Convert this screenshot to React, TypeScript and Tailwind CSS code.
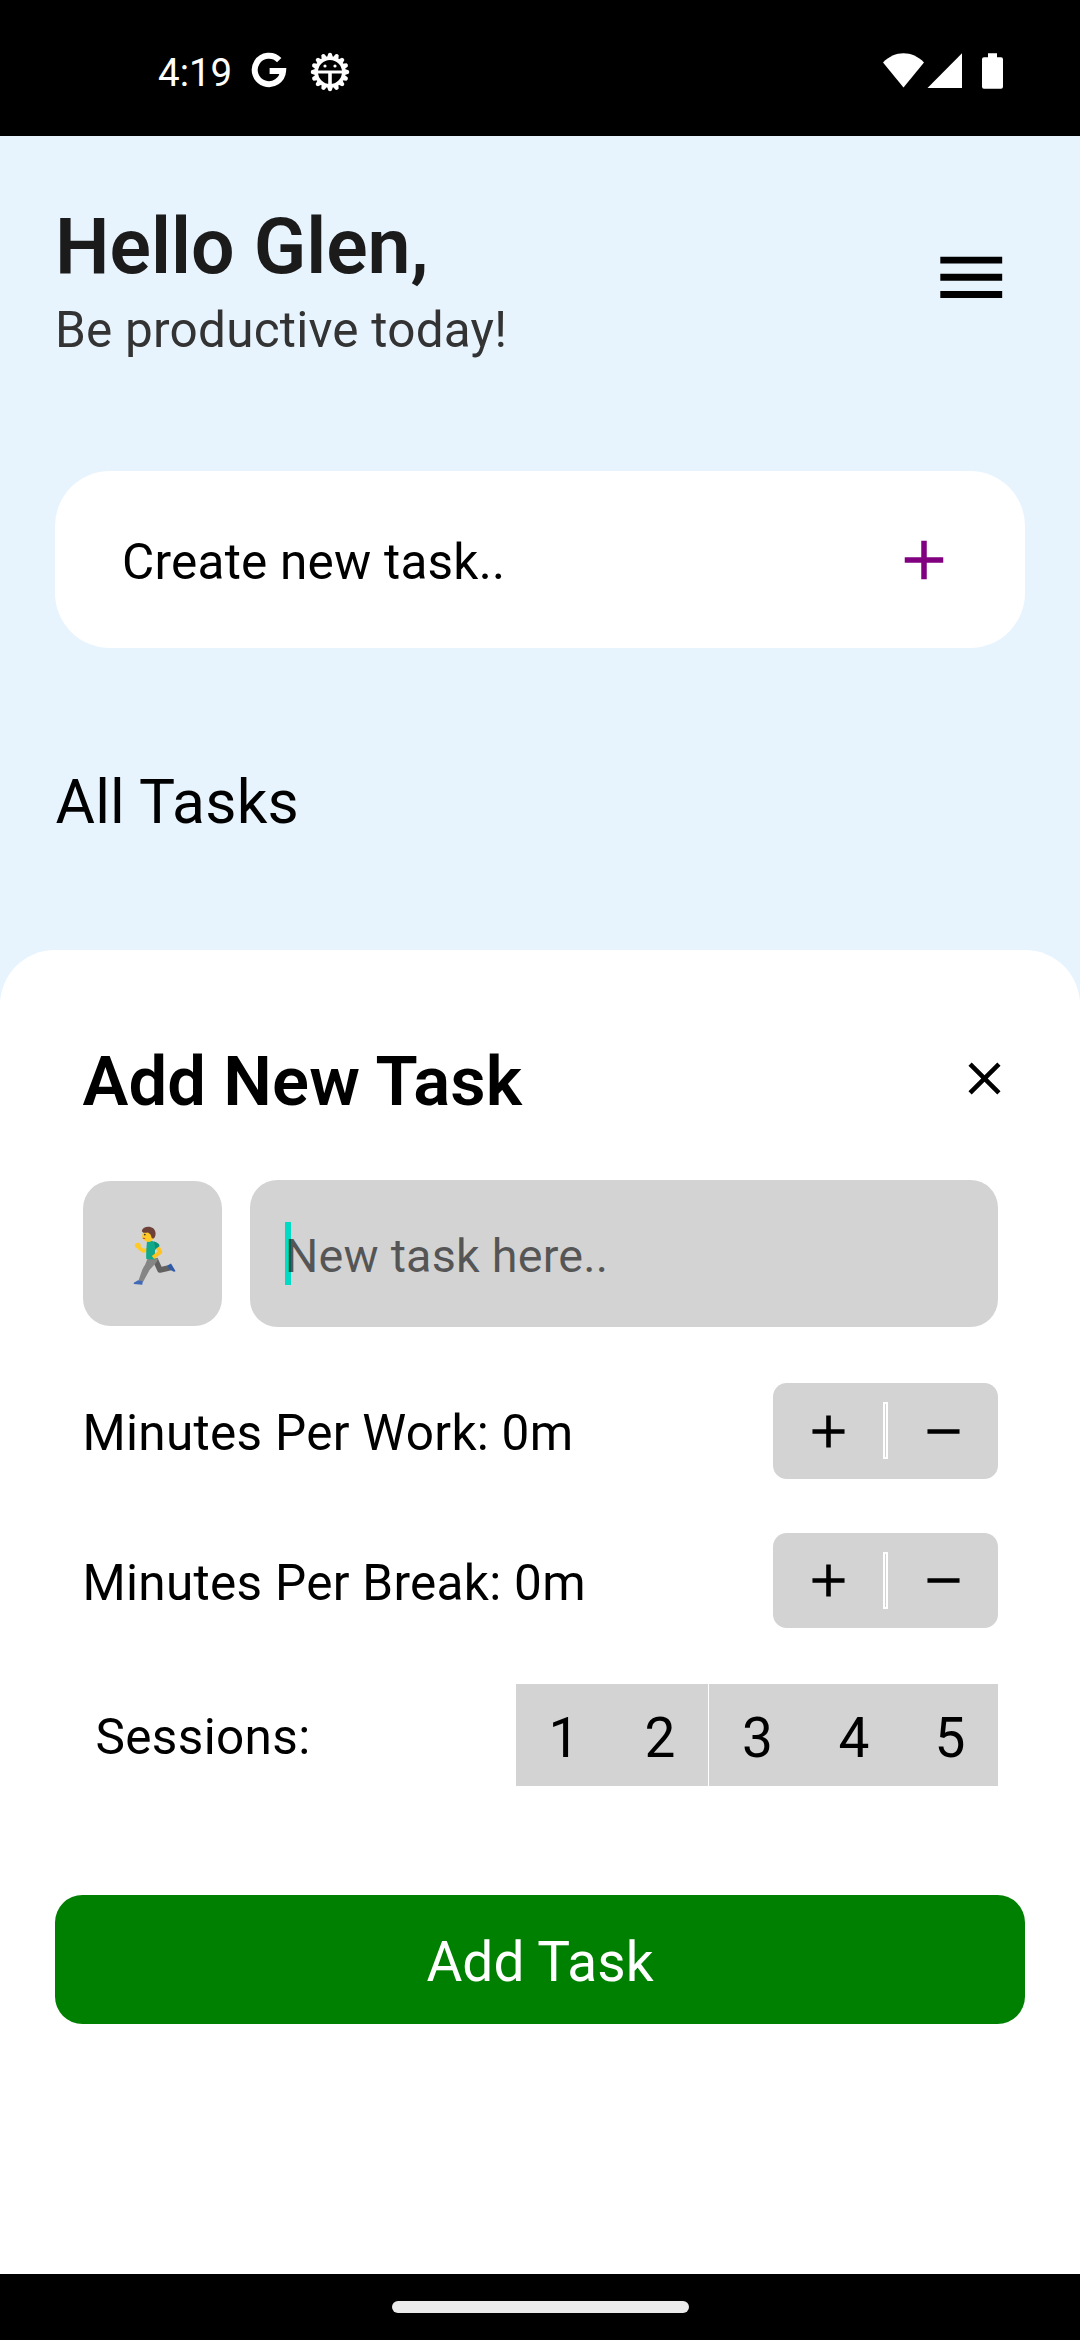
import React from "react";

function GoogleIcon() {
  return (
    <svg className="ml-[20px] h-[36px] w-[36px]" viewBox="0 0 36 36" fill="none">
      <path d="M28.2 8.1 A14.2 14.2 0 1 0 32.1 19 H18.6" stroke="#fff" strokeWidth="6" />
    </svg>
  );
}

function GearIcon() {
  const teeth = Array.from({ length: 16 }, (_, i) => i * 22.5);
  return (
    <svg className="ml-[23px] h-[40px] w-[40px]" viewBox="-20 -20 40 40" fill="none">
      {teeth.map((a) => (
        <path key={a} d="M-3.2 -14 L-1.7 -18.6 Q0 -20 1.7 -18.6 L3.2 -14 Z" fill="#fff" transform={`rotate(${a})`} />
      ))}
      <circle r="13.7" stroke="#fff" strokeWidth="3.4" />
      <path d="M-13 0 H13" stroke="#fff" strokeWidth="3" />
      <path d="M0 0 V15" stroke="#fff" strokeWidth="3.6" />
      <circle cx="-5" cy="-6" r="1.6" fill="#fff" />
      <circle cx="5" cy="-6" r="1.6" fill="#fff" />
    </svg>
  );
}

function StatusBar() {
  return (
    <div className="flex h-[136px] shrink-0 items-start bg-black pr-[77px] pl-[158px] text-white">
      <span className="mt-[50px] w-[73px] text-[38.5px] leading-[45px] whitespace-nowrap">4:19</span>
      <div className="mt-[52px] flex flex-1 items-start">
        <GoogleIcon />
        <GearIcon />
        <svg className="mt-[1px] ml-auto h-[36px] w-[120px]" viewBox="0 0 120 36" fill="#fff">
          <path d="M0 9.6 C11.5 -2.8 29.5 -2.8 41 9.6 L20.5 34.5 Z" />
          <path d="M79 0.3 V35 H44.5 Z" />
          <path d="M105 0.3 h9 v4 h4 a2 2 0 0 1 2 2 v27.5 a2 2 0 0 1 -2 2 h-17 a2 2 0 0 1 -2 -2 v-27.5 a2 2 0 0 1 2 -2 h4 z" />
        </svg>
      </div>
    </div>
  );
}

function PlusIcon({ className }: { className: string }) {
  return (
    <svg className={className} viewBox="0 0 24 24" fill="currentColor">
      <path d="M19 13h-6v6h-2v-6H5v-2h6V5h2v6h6v2z" />
    </svg>
  );
}

function Runner() {
  return (
    <svg className="mt-[4px] mr-[-5px] h-[60px] w-[44px] shrink-0" viewBox="0 0 44 60">
      <path d="M22 33 L27 44 L38 41.5" stroke="#616161" strokeWidth="5.5" fill="none" strokeLinejoin="round" />
      <path d="M34.5 39.5 L38 37.5 L42.6 45.2 L40.8 45.8 L36 43 Z" fill="#2f5aa8" />
      <path d="M15 31.5 L25 32.5 C24 38 18 41 16 45 L10 56 L5.5 54.5 C8 48 9 43 12 39 Z" fill="#858585" />
      <path d="M5 54.3 L9.8 55.2 L9.3 58.8 L0.8 58 C0.5 56 3 56 5 54.3 Z" fill="#4269b5" />
      <path d="M14.5 23.5 L10.5 25 L5.5 21.5" stroke="#ffca28" strokeWidth="3.6" fill="none" strokeLinejoin="round" />
      <ellipse cx="4.8" cy="19.5" rx="3" ry="2.8" fill="#ffca28" />
      <path d="M14 15.5 C17 14 21 14.8 26.5 19 L22 24 L21.8 33.5 L13.3 33 C13 28 13.5 20 14 15.5 Z" fill="#12a88a" />
      <path d="M21 15.5 C24 16 26 18 26.5 20 L22.5 23.5 Z" fill="#0b9077" />
      <path d="M25 21.5 L27.3 26.2 L20 31.5" stroke="#ffc422" strokeWidth="4" fill="none" strokeLinejoin="round" />
      <path d="M10.3 5.5 C12 3.5 20 4 20.5 9 C21 14 18 16.5 14.5 15.8 C10.5 15 8.8 11.5 9.2 9.5 Z" fill="#ffca28" />
      <path d="M8.8 5 C10 0 17 -0.2 20.5 2.5 C23.5 5.5 23 10.5 20.6 12.5 L18.8 12.3 L17.5 8.5 L15 6.5 C12 7 9.5 7 8.8 5 Z" fill="#6d4038" />
      <circle cx="11.8" cy="8.6" r="0.9" fill="#4a342c" />
      <path d="M9.8 12.2 L12.3 12.6" stroke="#c0392b" strokeWidth="0.9" />
    </svg>
  );
}

function Stepper({ className }: { className: string }) {
  return (
    <div className={className}>
      <PlusIcon className="h-[55px] w-[55px]" />
      <div className="mt-[-1px] ml-[27px] h-[57px] w-[5px] border-2 border-white" />
      <svg className="ml-[28px] h-[55px] w-[55px]" viewBox="0 0 24 24">
        <path d="M19 13H5v-2h14v2z" />
      </svg>
    </div>
  );
}

export default function App() {
  return (
    <div className="flex h-[2340px] w-[1080px] flex-col overflow-hidden bg-[#e7f4fe] font-['Roboto',sans-serif] text-black">
      <StatusBar />

      <header className="mt-[66px] flex items-start justify-between pr-[68px] pl-[55px]">
        <div>
          <h1 className="text-[77px] leading-[90px] font-semibold text-[#1b1b1b]">Hello Glen,</h1>
          <p className="mt-[9px] text-[49.5px] leading-[58px] tracking-[0.22px] text-[#333]">Be productive today!</p>
        </div>
        <svg className="mt-[33.6px] h-[82.5px] w-[82.5px]" viewBox="0 0 24 24">
          <path d="M3 18h18v-2H3v2zm0-5h18v-2H3v2zm0-7v2h18V6H3z" />
        </svg>
      </header>

      <div className="mx-[55px] mt-[112px] flex h-[177px] shrink-0 items-center justify-between rounded-[55px] bg-white pr-[68px] pl-[67px]">
        <span className="pt-[5px] text-[49.5px] leading-[58px] tracking-[0.23px]">Create new task..</span>
        <PlusIcon className="h-[66px] w-[66px] text-[#800080]" />
      </div>

      <h2 className="mt-[120px] pl-[55.5px] text-[60.5px] leading-[70px] tracking-[0.22px]">All Tasks</h2>

      <section className="mt-[112px] flex-1 rounded-t-[55px] bg-white pt-[91px]">
        <div className="flex h-[80px] items-start justify-between pr-[68px] pl-[82.5px]">
          <h3 className="text-[68.75px] leading-[81px] font-semibold tracking-[0.11px]">Add New Task</h3>
          <svg className="mt-[10px] h-[55px] w-[55px]" viewBox="0 0 24 24">
            <path d="M19 6.41L17.59 5 12 10.59 6.41 5 5 6.41 10.59 12 5 17.59 6.41 19 12 13.41 17.59 19 19 17.59 13.41 12 19 6.41z" />
          </svg>
        </div>

        <div className="mt-[59px] mr-[82px] ml-[83px] flex h-[147px] items-center gap-[28px]">
          <div className="flex h-[145px] w-[139px] items-center justify-center rounded-[27.5px] bg-[#d3d3d3]">
            <Runner />
          </div>
          <div className="relative flex h-[147px] flex-1 items-center rounded-[27.5px] bg-[#d3d3d3] pl-[35px]">
            <div className="absolute top-[42px] left-[35px] h-[63px] w-[6px] bg-[#03dac5]" />
            <span className="relative pt-[5px] text-[46.75px] leading-[56px] tracking-[0.19px] text-black/60">
              New task here..
            </span>
          </div>
        </div>

        <div className="mt-[56px] mr-[82px] ml-[82.5px] flex h-[96px] items-center justify-between">
          <span className="pt-[4px] text-[49.5px] leading-[58px] tracking-[0.29px]">Minutes Per Work: 0m</span>
          <Stepper className="flex h-[96px] w-[225px] items-center rounded-[13.75px] bg-[#d3d3d3] pl-[28px]" />
        </div>

        <div className="mt-[54px] mr-[82px] ml-[82.5px] flex h-[95px] items-center justify-between">
          <span className="pt-[5px] text-[49.5px] leading-[58px] tracking-[0.29px]">Minutes Per Break: 0m</span>
          <Stepper className="flex h-[95px] w-[225px] items-center rounded-[13.75px] bg-[#d3d3d3] pl-[28px]" />
        </div>

        <div className="mt-[56px] mr-[82px] ml-[95.5px] flex h-[102px] items-center justify-between">
          <span className="pt-[4px] text-[49.5px] leading-[58px] tracking-[0.35px]">Sessions:</span>
          <div className="flex h-[102px] w-[482px] text-center text-[55px] leading-[108px]">
            <div className="w-[96px] bg-[#d3d3d3]">1</div>
            <div className="w-[96px] bg-[#d3d3d3]">2</div>
            <div className="ml-[1px] w-[97px] bg-[#d3d3d3]">3</div>
            <div className="w-[96px] bg-[#d3d3d3]">4</div>
            <div className="w-[96px] bg-[#d3d3d3]">5</div>
          </div>
        </div>

        <div className="mx-[55px] mt-[109px] flex h-[129px] items-center justify-center rounded-[27.5px] bg-[#008000] pt-[5px] text-[55px] leading-[64px] tracking-[0.1px] text-white">
          Add Task
        </div>
      </section>

      <div className="flex h-[66px] shrink-0 justify-center bg-black pt-[27px]">
        <div className="h-[12px] w-[297px] rounded-full bg-[#ebebeb]" />
      </div>
    </div>
  );
}
